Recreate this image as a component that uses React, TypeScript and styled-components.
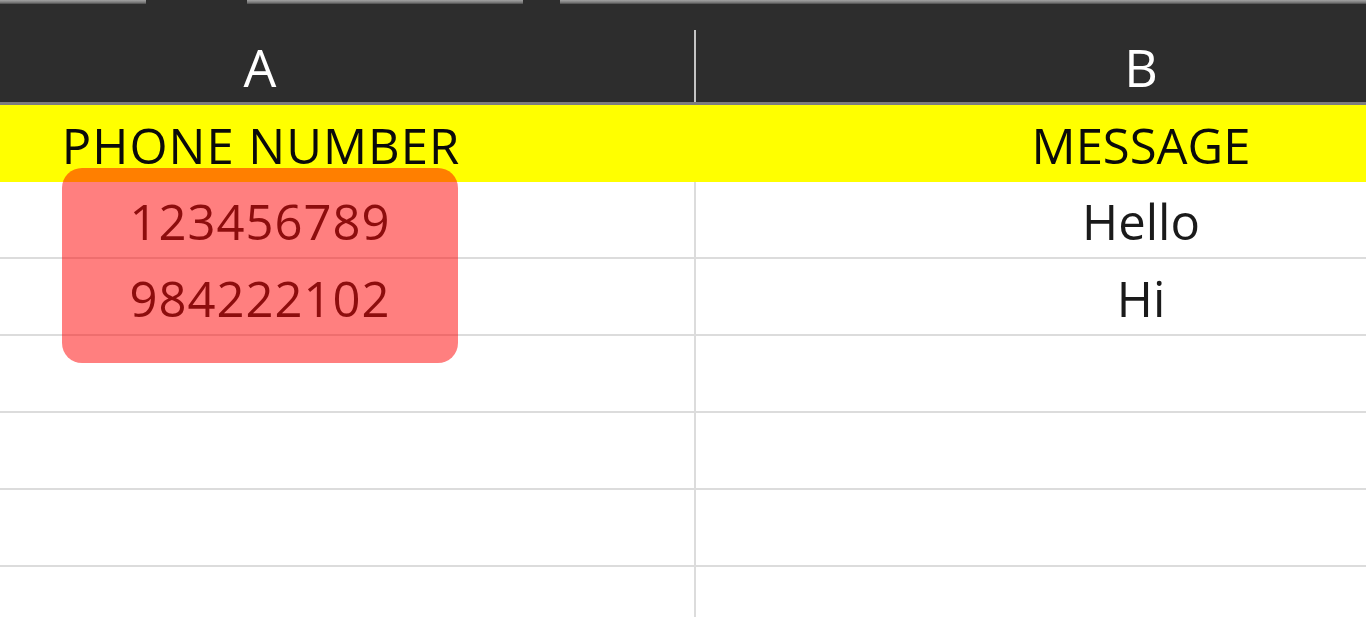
import React from "react";
import styled, { createGlobalStyle } from "styled-components";

const GlobalStyle = createGlobalStyle`
  html, body {
    margin: 0;
    padding: 0;
    background: #ffffff;
    overflow: hidden;
  }
  body {
    font-family: "Open Sans", "Liberation Sans", sans-serif;
  }
`;

const columns = [
  { letter: "A", title: "PHONE NUMBER", spacing: 1 },
  { letter: "B", title: "MESSAGE", spacing: 0 },
];

const rows = [
  ["123456789", "Hello"],
  ["984222102", "Hi"],
  ["", ""],
  ["", ""],
  ["", ""],
  ["", ""],
];

const tabs = [
  { width: 146, offset: 0 },
  { width: 276, offset: 101 },
  { width: 806, offset: 37 },
];

const App: React.FC = () => {
  return (
    <Page>
      <GlobalStyle />
      <TopBar>
        {tabs.map((t, i) => (
          <TabEdge key={i} $width={t.width} $offset={t.offset} />
        ))}
      </TopBar>
      <Sheet>
        <HeaderRow>
          {columns.map((c, i) => (
            <ColumnHead key={c.letter} $last={i === columns.length - 1}>
              {c.letter}
            </ColumnHead>
          ))}
        </HeaderRow>
        <TitleRow>
          {columns.map((c) => (
            <TitleCell key={c.title} $spacing={c.spacing}>
              {c.title}
            </TitleCell>
          ))}
        </TitleRow>
        {rows.map((r, i) => (
          <Row key={i}>
            {r.map((v, j) => (
              <Cell key={j} $last={j === r.length - 1} $spacing={columns[j].spacing}>
                {v}
              </Cell>
            ))}
          </Row>
        ))}
      </Sheet>
      <Highlight />
    </Page>
  );
};

export default App;

const Page = styled.div`
  position: relative;
  width: 1366px;
  height: 617px;
  overflow: hidden;
  background: #ffffff;
`;

const TopBar = styled.div`
  display: flex;
  height: 30px;
  background: #2d2d2d;
`;

const TabEdge = styled.div<{ $width: number; $offset: number }>`
  width: ${(p) => p.$width}px;
  margin-left: ${(p) => p.$offset}px;
  height: 4px;
  background: linear-gradient(#a3a3a3, #7a7a7a 60%, #4a4a4a);
`;

const Sheet = styled.div`
  margin-left: -174px;
  width: 1760px;
`;

const HeaderRow = styled.div`
  display: grid;
  grid-template-columns: 870px 1fr;
  height: 72px;
  background: #2d2d2d;
  border-bottom: 3px solid #7d7d7d;
`;

const ColumnHead = styled.div<{ $last: boolean }>`
  display: flex;
  align-items: center;
  justify-content: center;
  color: #ffffff;
  font-size: 52px;
  line-height: 1;
  padding-top: 2px;
  border-right: ${(p) => (p.$last ? "none" : "2px solid #c4c4c4")};
`;

const TitleRow = styled.div`
  display: grid;
  grid-template-columns: 870px 1fr;
  height: 77px;
  background: #ffff00;
`;

const TitleCell = styled.div<{ $spacing: number }>`
  display: flex;
  align-items: center;
  justify-content: center;
  color: #0a0a0a;
  font-size: 49px;
  letter-spacing: ${(p) => p.$spacing}px;
  padding-top: 2px;
`;

const Row = styled.div`
  display: grid;
  grid-template-columns: 870px 1fr;
  height: 77px;
  box-sizing: border-box;
  border-bottom: 2px solid #dcdcdc;
`;

const Cell = styled.div<{ $last: boolean; $spacing: number }>`
  display: flex;
  align-items: center;
  justify-content: center;
  color: #1a1a1a;
  font-size: 49px;
  letter-spacing: ${(p) => p.$spacing}px;
  padding-top: 3px;
  border-right: ${(p) => (p.$last ? "none" : "2px solid #dcdcdc")};
`;

const Highlight = styled.div`
  position: absolute;
  left: 62px;
  top: 168px;
  width: 396px;
  height: 195px;
  border-radius: 20px;
  background: rgba(255, 0, 0, 0.5);
`;
